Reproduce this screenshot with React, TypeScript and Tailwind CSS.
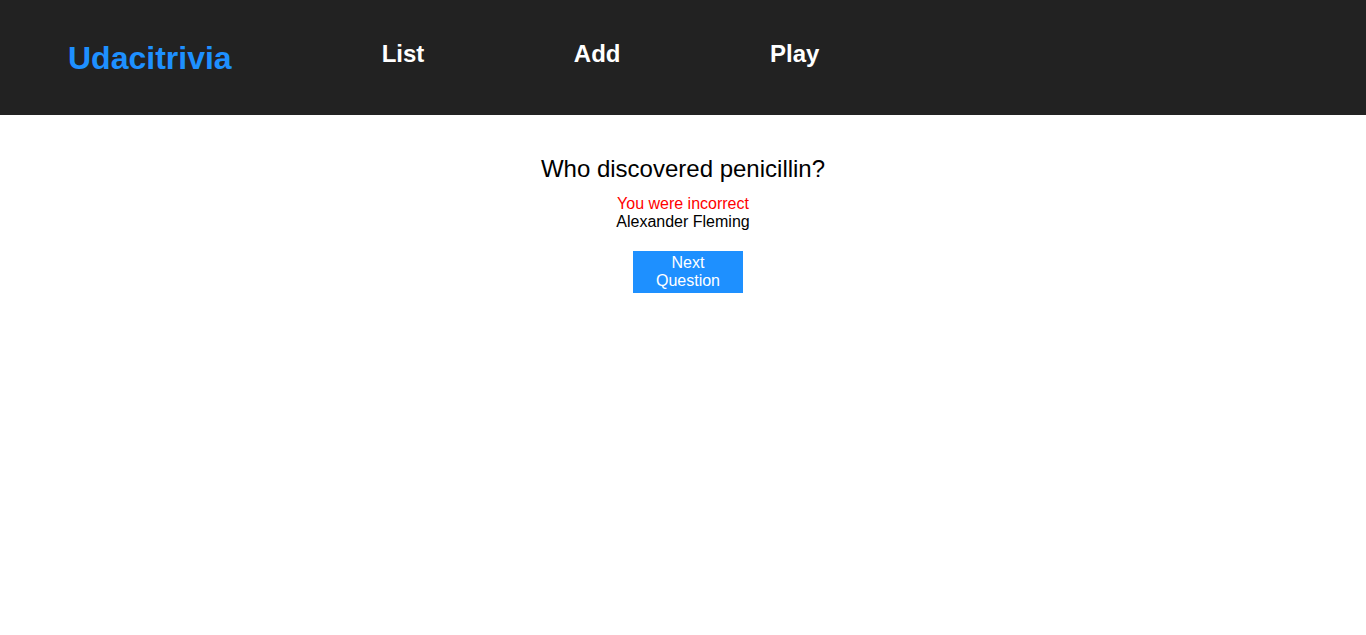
export default function App() {
  return (
    <div className="min-h-[635px] bg-white font-['Liberation_Sans',Arial,sans-serif]">
      {/* Header */}
      <div className="flex h-[115px] items-start bg-[#222222] pl-[68px] pt-[40px]">
        <h1 className="text-[32px] font-bold leading-[1.15] text-[#1e90ff]">Udacitrivia</h1>
        <div className="ml-[150px] flex gap-[149.5px]">
          <h2 className="text-[24px] font-bold leading-[1.15] text-white">List</h2>
          <h2 className="text-[24px] font-bold leading-[1.15] text-white">Add</h2>
          <h2 className="text-[24px] font-bold leading-[1.15] text-white">Play</h2>
        </div>
      </div>

      {/* Quiz */}
      <div className="flex flex-col items-center pt-[40px] text-black">
        <div className="text-[24px] leading-[1.15]">Who discovered penicillin?</div>
        <div className="mt-[12px] text-[16px] leading-[1.15] text-[#ff0000]">You were incorrect</div>
        <div className="text-[16px] leading-[1.15]">Alexander Fleming</div>
        <button className="ml-[10px] mt-[20px] flex h-[42px] w-[110px] items-center justify-center bg-[#1e90ff] px-[6px] text-center text-[16px] leading-[18px] text-white">
          Next Question
        </button>
      </div>
    </div>
  );
}
